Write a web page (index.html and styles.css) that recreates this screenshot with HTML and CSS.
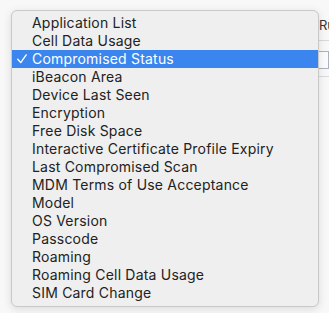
FILE: index.html
```html
<!DOCTYPE html>
<html>
<head>
<meta charset="utf-8">
<link rel="stylesheet" href="styles.css">
</head>
<body>
<div class="page">
  <div class="bg-col">
    <div class="bg-label">Ru</div>
    <div class="bg-rule"></div>
    <div class="bg-input"></div>
    <div class="bg-rule bg-rule2"></div>
  </div>
</div>
<div class="menu">
  <ul class="menu-list">
    <li class="item">Application List</li>
    <li class="item">Cell Data Usage</li>
    <li class="item selected"><svg class="check" width="10" height="10" viewBox="0 0 10 10"><path d="M0.8 5.2 L3.7 8.6 L9.2 0.9" fill="none" stroke="#fff" stroke-width="1.4" stroke-linecap="round" stroke-linejoin="round"/></svg>Compromised Status</li>
    <li class="item">iBeacon Area</li>
    <li class="item">Device Last Seen</li>
    <li class="item">Encryption</li>
    <li class="item">Free Disk Space</li>
    <li class="item">Interactive Certificate Profile Expiry</li>
    <li class="item">Last Compromised Scan</li>
    <li class="item">MDM Terms of Use Acceptance</li>
    <li class="item">Model</li>
    <li class="item">OS Version</li>
    <li class="item">Passcode</li>
    <li class="item">Roaming</li>
    <li class="item">Roaming Cell Data Usage</li>
    <li class="item">SIM Card Change</li>
  </ul>
</div>
</body>
</html>
```
FILE: styles.css
```css
html, body {
  margin: 0;
  padding: 0;
  width: 329px;
  height: 313px;
  overflow: hidden;
  background: #f8f8f8;
  font-family: Inter, "Liberation Sans", Arial, sans-serif;
}
.page {
  position: relative;
  width: 329px;
  height: 313px;
}
.bg-col {
  margin-left: 319px;
  padding-top: 18px;
  display: flex;
  flex-direction: column;
  overflow: hidden;
}
.bg-label {
  font-size: 13px;
  color: #333;
  line-height: 15px;
  white-space: nowrap;
}
.bg-rule {
  height: 1px;
  background: #d8d8d8;
  margin-top: 7px;
}
.bg-input {
  margin-top: 10px;
  height: 16px;
  border: 1px solid #a9b3bf;
  border-left: none;
  background: #fbfbfb;
}
.bg-rule2 {
  margin-top: 7px;
}
.menu {
  position: absolute;
  left: 11px;
  top: 10px;
  width: 306px;
  height: 295px;
  background: #efefef;
  border: 1px solid #c9c9c9;
  border-radius: 6px;
  box-shadow: 0 2px 8px rgba(0,0,0,0.12);
  overflow: hidden;
}
.menu-list {
  list-style: none;
  margin: 0;
  padding: 3px 0 0 0;
}
.item {
  position: relative;
  height: 18px;
  line-height: 18px;
  padding-left: 20px;
  font-size: 14px;
  letter-spacing: 0.2px;
  color: #222;
  white-space: nowrap;
}
.selected {
  background: #3a86ee;
  color: #fff;
}
.check {
  position: absolute;
  left: 5px;
  top: 4px;
}
```
